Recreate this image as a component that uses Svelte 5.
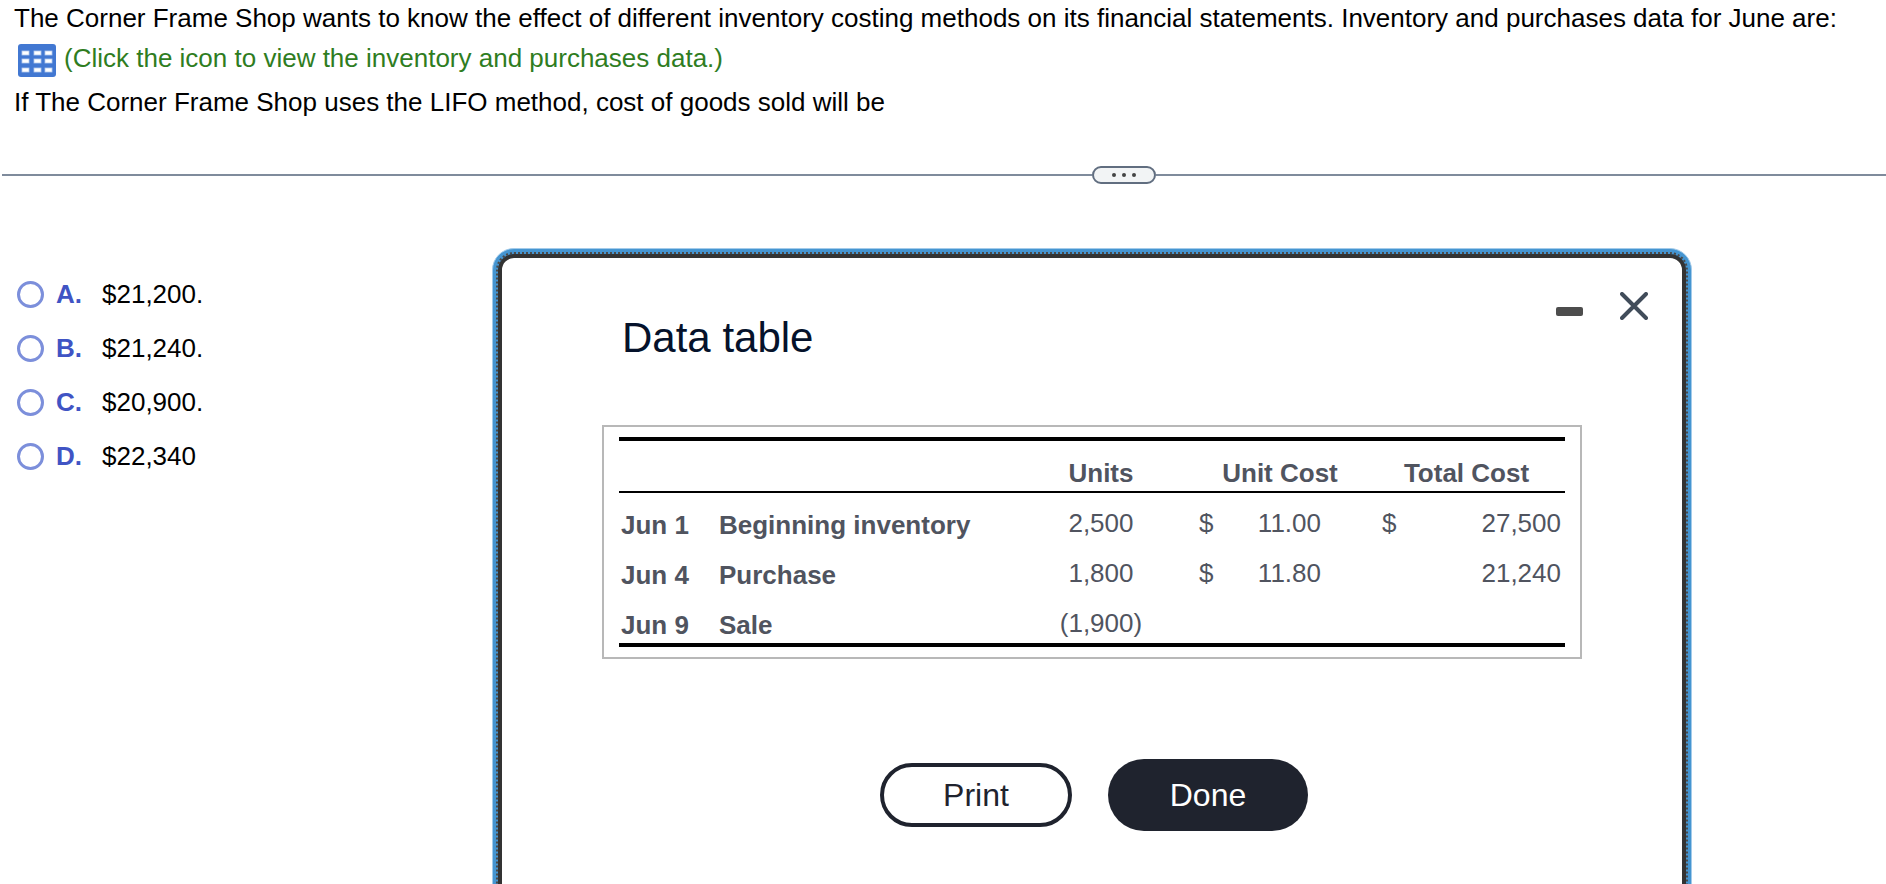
<script>
    let choices = [
        {letter: "A", text: "$21,200."},
        {letter: "B", text: "$21,240."},
        {letter: "C", text: "$20,900."},
        {letter: "D", text: "$22,340"},
    ]

    let rows = [
        {date: "Jun 1", name: "Beginning inventory", units: "2,500", costSign: "$", cost: "11.00", totalSign: "$", total: "27,500"},
        {date: "Jun 4", name: "Purchase", units: "1,800", costSign: "$", cost: "11.80", totalSign: "", total: "21,240"},
        {date: "Jun 9", name: "Sale", units: "(1,900)", costSign: "", cost: "", totalSign: "", total: ""},
    ]

    let answer = ""
    let open = true
    let minimized = false

    function toggle() {
        minimized = !minimized
    }

    function close() {
        open = false
    }

    function show() {
        open = true
        minimized = false
    }
</script>

<div class="page">
    <header class="question">
        <p>The Corner Frame Shop wants to know the effect of different inventory costing methods on its financial statements. Inventory and purchases data for June are:</p>
        <button class="data-link" on:click={show}>
            <svg width="38" height="33" viewBox="0 0 38 33" aria-hidden="true">
                <rect width="38" height="33" rx="3" fill="#4278d2" />
                {#each [7, 15, 24] as y}
                    {#each [4, 16, 27] as x}
                        <rect {x} {y} width="7" height="4" fill="#fff" stroke="#b4caee" stroke-width="0.8" />
                    {/each}
                {/each}
            </svg>
            <span>(Click the icon to view the inventory and purchases data.)</span>
        </button>
        <p>If The Corner Frame Shop uses the LIFO method, cost of goods sold will be</p>
    </header>

    <div class="divider">
        <span class="line before"></span>
        <button class="handle" aria-label="Resize panels">
            <i></i><i></i><i></i>
        </button>
        <span class="line after"></span>
    </div>

    <main class="work">
        <div class="choices">
            {#each choices as choice}
                <label class="choice">
                    <input type="radio" name="answer" value={choice.letter} bind:group={answer}>
                    <b>{choice.letter}.</b>
                    <span>{choice.text}</span>
                </label>
            {/each}
        </div>

        {#if open}
            <div class="frame">
                <div class="dots">
                    <section class="dialog" role="dialog" aria-labelledby="dialog-title">
                        <div class="top">
                            <h1 id="dialog-title">Data table</h1>
                            <div class="tools">
                                <button aria-label="Minimize" on:click={toggle}>
                                    <svg width="28" height="28" viewBox="0 0 28 28">
                                        <rect x="0" y="15" width="27" height="9" rx="2" fill="#4d4d4d" />
                                    </svg>
                                </button>
                                <button aria-label="Close" on:click={close}>
                                    <svg width="28" height="28" viewBox="0 0 28 28">
                                        <path d="M2 2L26 26M26 2L2 26" stroke="#414c5a" stroke-width="4" stroke-linecap="round" />
                                    </svg>
                                </button>
                            </div>
                        </div>

                        {#if !minimized}
                            <div class="table-box">
                                <table>
                                    <colgroup>
                                        <col class="date">
                                        <col>
                                        <col class="units">
                                        <col class="cost-sign">
                                        <col class="cost">
                                        <col class="total-sign">
                                        <col class="total">
                                    </colgroup>
                                    <thead>
                                        <tr>
                                            <td colspan="2"></td>
                                            <th scope="col">Units</th>
                                            <th scope="col" colspan="2">Unit Cost</th>
                                            <th scope="col" colspan="2">Total Cost</th>
                                        </tr>
                                    </thead>
                                    <tbody>
                                        {#each rows as row}
                                            <tr>
                                                <th scope="row">{row.date}</th>
                                                <th scope="row">{row.name}</th>
                                                <td class="units">{row.units}</td>
                                                <td class="sign">{row.costSign}</td>
                                                <td class="cost">{row.cost}</td>
                                                <td class="sign">{row.totalSign}</td>
                                                <td class="total">{row.total}</td>
                                            </tr>
                                        {/each}
                                    </tbody>
                                </table>
                            </div>

                            <div class="actions">
                                <button class="print" on:click={() => window.print()}>Print</button>
                                <button class="done" on:click={close}>Done</button>
                            </div>
                        {/if}
                    </section>
                </div>
            </div>
        {/if}
    </main>
</div>

<style>
    :global(body) {
        background-color: white;
    }

    .page {
        height: 100vh;
        overflow: hidden;

        font-family: "Liberation Sans", Arial, Helvetica, sans-serif;
        font-size: 26px;
        line-height: 30px;
        color: black;
    }

    button {
        padding: 0;
        border: none;
        background: none;
        font: inherit;
        cursor: pointer;
    }

    .question {
        display: flex;
        flex-direction: column;
        align-items: flex-start;
        gap: 10px;
        padding: 3px 14px 0;
    }

    .question p {
        margin: 0;
    }

    .data-link {
        display: flex;
        gap: 8px;
        height: 34px;
        margin-left: 4px;
        color: #2f7d1f;
        text-align: left;
    }

    .data-link svg {
        flex: none;
        margin-top: 1px;
    }

    .divider {
        display: flex;
        align-items: center;
        margin-top: 49px;
        padding-left: 2px;
    }

    .line {
        height: 2px;
        background-color: #7f8b9c;
    }

    .before {
        flex: 1090;
    }

    .after {
        flex: 730;
    }

    .handle {
        display: flex;
        align-items: center;
        justify-content: center;
        gap: 6px;
        box-sizing: border-box;
        width: 64px;
        height: 18px;

        border: 2px solid #616e80;
        border-radius: 9px;
        background-color: #f2f4f5;
    }

    .handle i {
        width: 4px;
        height: 4px;
        border-radius: 50%;
        background-color: #444;
    }

    .work {
        display: grid;
        grid-template-columns: 492fr 1200fr 194fr;
        align-items: start;
        margin-top: 64px;
    }

    .choices {
        padding: 19px 0 0 17px;
    }

    .choice {
        display: flex;
        align-items: center;
        height: 54px;
    }

    .choice input {
        appearance: none;
        flex: none;
        width: 27px;
        height: 27px;
        margin: 0 12px 0 0;

        border: 3px solid #7c8fdb;
        border-radius: 50%;
    }

    .choice input:checked {
        background: radial-gradient(#4054c4 40%, white 45%);
    }

    .choice b {
        width: 46px;
        color: #4054c4;
    }

    .frame {
        padding: 3px;
        border: 1px solid #a3cbea;
        border-radius: 22px;
        background-color: #4595d1;
    }

    .dots {
        border: 2px dotted #4a4a4a;
        border-radius: 18px;
    }

    .dialog {
        padding: 34px 100px 100px;
        border: 4px solid #333;
        border-radius: 16px;
        background-color: white;
    }

    .top {
        display: flex;
        justify-content: space-between;
        align-items: flex-start;
        padding-left: 20px;
    }

    h1 {
        margin: 22px 0 0;
        font-size: 42px;
        line-height: 48px;
        font-weight: normal;
        color: #05122b;
    }

    .tools {
        display: flex;
        gap: 36px;
        margin-right: -66px;
    }

    .tools svg {
        display: block;
    }

    .table-box {
        margin-top: 63px;
        padding: 10px 15px;
        border: 2px solid #b8b8b8;
    }

    table {
        width: 100%;
        table-layout: fixed;
        border-spacing: 0;
        border-top: 4px solid black;
        border-bottom: 4px solid black;
        color: #50545f;
    }

    col.date {
        width: 98px;
    }

    col.units {
        width: 182px;
    }

    col.cost-sign {
        width: 38px;
    }

    col.cost {
        width: 138px;
    }

    col.total-sign {
        width: 40px;
    }

    col.total {
        width: 157px;
    }

    th {
        padding: 17px 0 3px 2px;
        text-align: left;
    }

    td {
        padding: 15px 0 5px;
    }

    thead th,
    thead td {
        border-bottom: 2px solid black;
    }

    thead th {
        padding-left: 0;
        text-align: center;
    }

    td.units {
        text-align: center;
    }

    .sign {
        text-align: left;
        padding-left: 7px;
    }

    td.cost {
        padding-right: 47px;
        text-align: right;
    }

    .cost + .sign {
        padding-left: 14px;
    }

    td.total {
        padding-right: 4px;
        text-align: right;
    }

    .actions {
        display: flex;
        justify-content: center;
        align-items: center;
        gap: 36px;
        margin-top: 100px;
        padding-left: 4px;
        font-size: 32px;
    }

    .print {
        width: 192px;
        height: 64px;
        border: 4px solid #1f232e;
        border-radius: 32px;
        color: #1f232e;
    }

    .done {
        width: 200px;
        height: 72px;
        border-radius: 36px;
        background-color: #1f232e;
        color: white;
    }
</style>
